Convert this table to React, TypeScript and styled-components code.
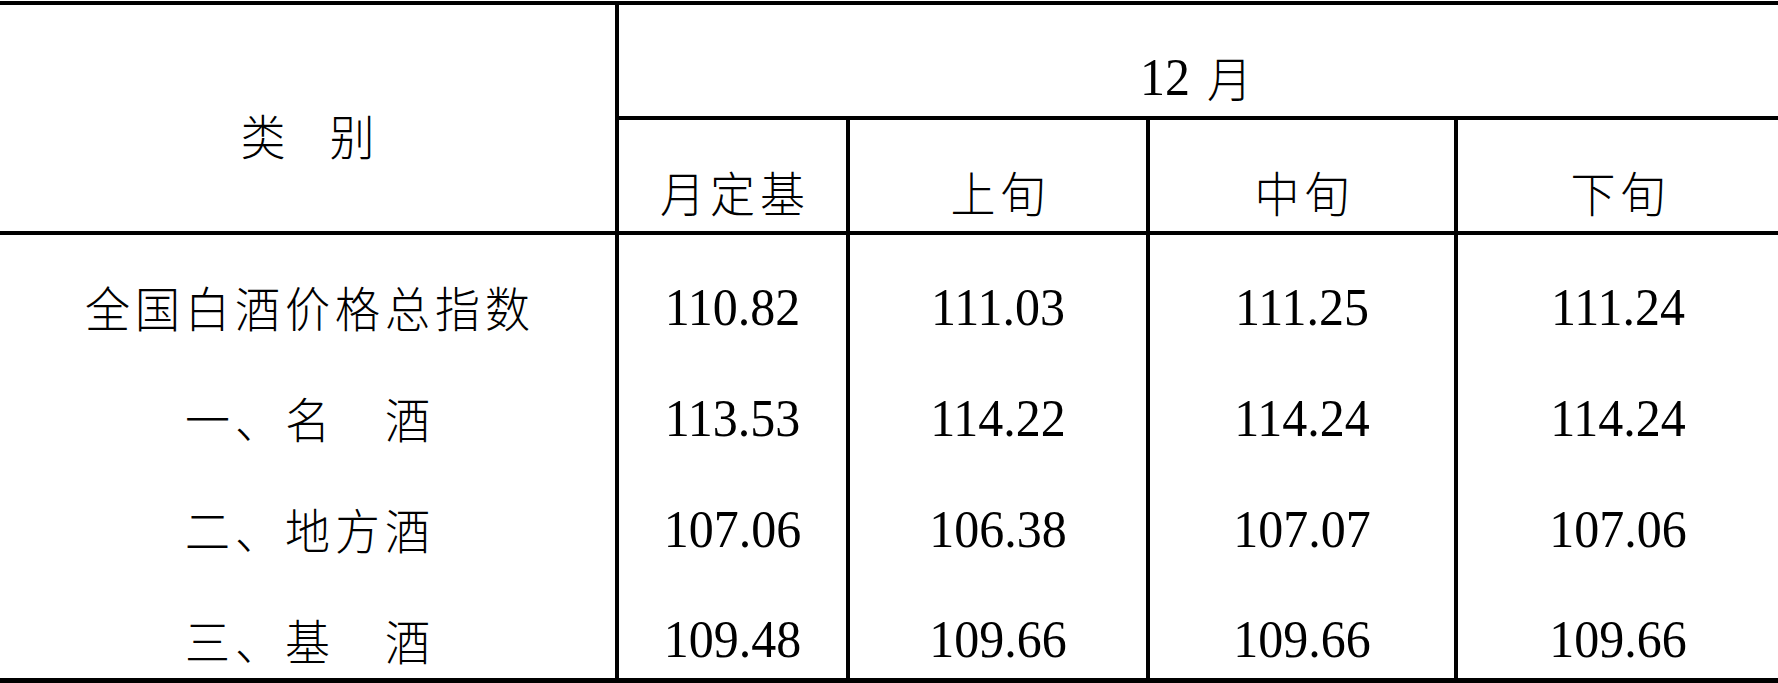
import React from "react";
import styled, { createGlobalStyle } from "styled-components";

const GlobalStyle = createGlobalStyle`
  html, body {
    margin: 0;
    padding: 0;
    background: #ffffff;
  }
  body {
    width: 1778px;
    height: 683px;
    overflow: hidden;
  }
`;

const rows = [
  { name: "全国白酒价格总指数", values: ["110.82", "111.03", "111.25", "111.24"] },
  { name: "一、名　酒", values: ["113.53", "114.22", "114.24", "114.24"] },
  { name: "二、地方酒", values: ["107.06", "106.38", "107.07", "107.06"] },
  { name: "三、基　酒", values: ["109.48", "109.66", "109.66", "109.66"] },
];

const periods = ["月定基", "上旬", "中旬", "下旬"];

const Sheet = styled.div`
  padding-top: 1px;
`;

const Grid = styled.div`
  display: grid;
  grid-template-columns: 615px 231px 300px 308px 324px;
  grid-template-rows: 115px 115px 111px 111px 111px 110px;
  border-top: 4px solid #000;
  border-bottom: 5px solid #000;
  color: #000;
`;

const Cell = styled.div<{ $left?: boolean; $bottom?: boolean }>`
  box-sizing: border-box;
  display: flex;
  align-items: center;
  justify-content: center;
  padding-top: 32px;
  border-left: ${(p) => (p.$left ? "4px solid #000" : "none")};
  border-bottom: ${(p) => (p.$bottom ? "4px solid #000" : "none")};
`;

const CategoryCell = styled(Cell)`
  grid-row: span 2;
`;

const MonthCell = styled(Cell)`
  grid-column: 2 / span 4;
`;

// the source table is a slightly tall-stretched scan, so glyphs get a little scaleY
const Han = styled.span<{ $wide?: boolean }>`
  display: inline-block;
  font-family: "Noto Sans CJK SC", "Noto Sans CJK TC", sans-serif;
  font-size: 45px;
  font-weight: 300;
  line-height: 1;
  letter-spacing: 5px;
  padding-left: 5px;
  word-spacing: ${(p) => (p.$wide ? "24px" : "0")};
  white-space: pre;
  transform: scaleY(1.07);
`;

const Num = styled.span`
  display: inline-block;
  font-family: "Liberation Serif", "Times New Roman", serif;
  font-size: 50px;
  line-height: 1;
  transform: scaleY(1.07);
`;

const MonthLabel = styled.div`
  display: flex;
  align-items: center;
  gap: 12px;
`;

const App = () => {
  return (
    <>
      <GlobalStyle />
      <Sheet>
        <Grid>
          <CategoryCell $bottom>
            <Han $wide>类 别</Han>
          </CategoryCell>
          <MonthCell $left $bottom>
            <MonthLabel>
              <Num>12</Num>
              <Han>月</Han>
            </MonthLabel>
          </MonthCell>
          {periods.map((p) => (
            <Cell key={p} $left $bottom>
              <Han>{p}</Han>
            </Cell>
          ))}
          {rows.map((r) => (
            <React.Fragment key={r.name}>
              <Cell>
                <Han>{r.name}</Han>
              </Cell>
              {r.values.map((v, i) => (
                <Cell key={i} $left>
                  <Num>{v}</Num>
                </Cell>
              ))}
            </React.Fragment>
          ))}
        </Grid>
      </Sheet>
    </>
  );
};

export default App;
